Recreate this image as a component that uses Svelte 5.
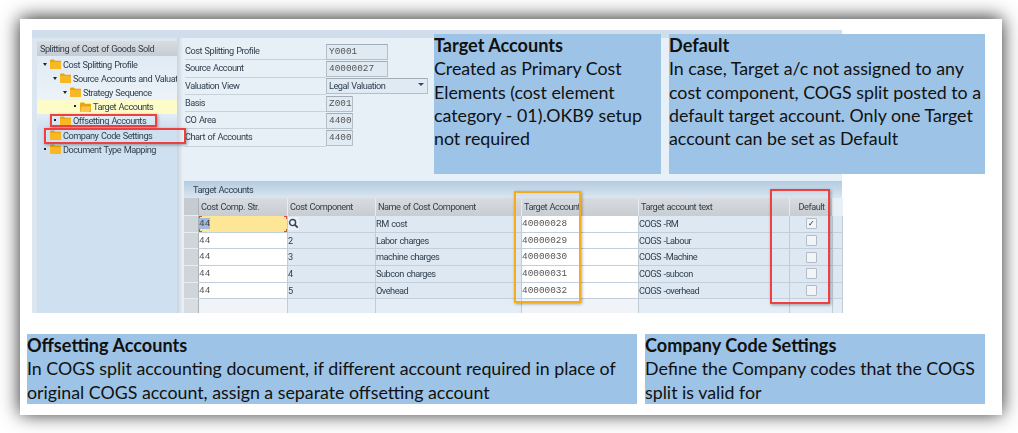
<script lang="ts">
	const tree = [
		{ label: 'Cost Splitting Profile', level: 0, mark: 'open' },
		{ label: 'Source Accounts and Valuation View', level: 1, mark: 'open' },
		{ label: 'Strategy Sequence', level: 2, mark: 'open' },
		{ label: 'Target Accounts', level: 3, mark: 'leaf', active: true },
		{ label: 'Offsetting Accounts', level: 1, mark: 'leaf' },
		{ label: 'Company Code Settings', level: 0, mark: 'leaf' },
		{ label: 'Document Type Mapping', level: 0, mark: 'leaf' }
	];

	const fields = [
		{ label: 'Cost Splitting Profile', value: 'Y0001', size: 'mid' },
		{ label: 'Source Account', value: '40000027', size: 'mid' },
		{ label: 'Valuation View', value: 'Legal Valuation', size: 'select' },
		{ label: 'Basis', value: 'Z001', size: 'small' },
		{ label: 'CO Area', value: '4400', size: 'small' },
		{ label: 'Chart of Accounts', value: '4400', size: 'small' }
	];

	const rows = [
		{ comp: '2', name: 'RM cost', account: '40000028', text: 'COGS -RM', checked: true },
		{ comp: '2', name: 'Labor charges', account: '40000029', text: 'COGS -Labour' },
		{ comp: '3', name: 'machine charges', account: '40000030', text: 'COGS -Machine' },
		{ comp: '4', name: 'Subcon charges', account: '40000031', text: 'COGS -subcon' },
		{ comp: '5', name: 'Ovehead', account: '40000032', text: 'COGS -overhead' }
	];
</script>

{#snippet folder(open)}
	<svg class="folder" viewBox="0 0 11 10" width="11" height="10" aria-hidden="true">
		<path d="M0 1.5 L0.6 .5 H4 L5 1.8 H11 V10 H0 Z" fill="#e8a412" />
		{#if open}
			<path d="M1.8 4.4 H11 L9.4 10 H0 Z" fill="#fbc64a" />
		{:else}
			<rect x="0" y="3" width="11" height="7" fill="#f8b823" />
		{/if}
	</svg>
{/snippet}

<div class="page">
	<div class="card">
		<div class="sap">
			<div class="sap-top"></div>
			<div class="sap-body">
				<aside class="nav">
					<div class="nav-head">Splitting of Cost of Goods Sold</div>
					<ul class="tree">
						{#each tree as item}
							<li class="node" class:active={item.active} style="padding-left: {6 + item.level * 10}px">
								<span class="mark {item.mark}"></span>
								{@render folder(item.active)}
								<span class="node-label">{item.label}</span>
							</li>
						{/each}
					</ul>
				</aside>
				<div class="splitter"></div>
				<main class="content">
					<div class="form">
						{#each fields as field}
							<div class="field">
								<span class="field-label">{field.label}</span>
								{#if field.size === 'select'}
									<span class="input select">{field.value}<i class="caret"></i></span>
								{:else}
									<span class="input mono {field.size}">{field.value}</span>
								{/if}
							</div>
						{/each}
					</div>
					<section class="grid-wrap">
						<div class="grid-title">Target Accounts</div>
						<div class="grid">
							<div class="gutter head"></div>
							<div class="th">Cost Comp. Str.</div>
							<div class="th">Cost Component</div>
							<div class="th">Name of Cost Component</div>
							<div class="th">Target Account</div>
							<div class="th">Target account text</div>
							<div class="th right">Default</div>
							<div class="th blank"></div>
							{#each rows as row, i}
								<div class="gutter"></div>
								<div class="td white mono" class:focus={i === 0}><span class:picked={i === 0}>44</span></div>
								<div class="td">
									{#if i === 0}
										<span class="lookup">
											<svg viewBox="0 0 12 12" width="11" height="11" aria-hidden="true">
												<circle cx="5" cy="5" r="3.3" fill="none" stroke="#33475a" stroke-width="1.6" />
												<path d="M7.6 7.6 L10.6 10.6" stroke="#33475a" stroke-width="2" />
											</svg>
										</span>
									{:else}
										{row.comp}
									{/if}
								</div>
								<div class="td">{row.name}</div>
								<div class="td white mono">{row.account}</div>
								<div class="td">{row.text}</div>
								<div class="td check-cell">
									<span class="check">{row.checked ? '✓' : ''}</span>
								</div>
								<div class="td"></div>
							{/each}
							<div class="gutter last"></div>
							<div class="td white last"></div>
							<div class="td last"></div>
							<div class="td last"></div>
							<div class="td white last"></div>
							<div class="td last"></div>
							<div class="td last"></div>
							<div class="td last"></div>
						</div>
					</section>
				</main>
			</div>
		</div>

		<div class="note note-target">
			<h3>Target Accounts</h3>
			<p>Created as Primary Cost Elements (cost element category - 01).OKB9 setup not required</p>
		</div>
		<div class="note note-default">
			<h3>Default</h3>
			<p>In case, Target a/c not assigned to any cost component, COGS split posted to a default target account. Only one Target account can be set as Default</p>
		</div>

		<span class="mark-box red box-offset"></span>
		<span class="mark-box red box-company"></span>
		<span class="mark-box orange box-account"></span>
		<span class="mark-box red box-check"></span>

		<div class="notes">
			<div class="note wide">
				<h3>Offsetting Accounts</h3>
				<p>In COGS split accounting document, if different account required in place of original COGS account, assign a separate offsetting account</p>
			</div>
			<div class="note narrow">
				<h3>Company Code Settings</h3>
				<p>Define the Company codes that the COGS split is valid for</p>
			</div>
		</div>
	</div>
</div>

<style>
	:global(body) {
		background: #fff;
	}
	.page {
		height: 433px;
		overflow: hidden;
		padding: 19px 0 0 20px;
		box-sizing: border-box;
	}
	.card {
		position: relative;
		box-sizing: border-box;
		width: 982px;
		height: 396px;
		padding: 11px 0 0 12px;
		background: #fff;
		box-shadow: 0 -1px 18px rgba(0, 0, 0, 0.85);
		font-family: Roboto, 'Liberation Sans', sans-serif;
	}
	.sap {
		width: 810px;
		height: 283px;
		display: flex;
		flex-direction: column;
		background: #e8f0f7;
		color: #2f3f4e;
		font-size: 9.2px;
		letter-spacing: -0.5px;
		word-spacing: 0.8px;
		filter: blur(0.25px);
	}
	.sap-top {
		height: 8px;
		background: #cfdeea;
	}
	.sap-body {
		flex: 1;
		display: flex;
		min-height: 0;
	}
	.nav {
		width: 145px;
		padding: 3px 0 0 5px;
		box-sizing: border-box;
		background: #dbe6f0;
		display: flex;
		flex-direction: column;
	}
	.nav-head {
		height: 15px;
		line-height: 15px;
		padding-left: 3px;
		background: linear-gradient(#d9dde2, #c6ccd3);
		white-space: nowrap;
	}
	.tree {
		flex: 1;
		list-style: none;
		margin: 0;
		padding: 1px 0 0;
		background: linear-gradient(#dfeaf4 0, #eef4f9 50px, #cfe0f0 72px, #cfe0f0 100%);
	}
	.node {
		display: flex;
		align-items: center;
		height: 14.2px;
		white-space: nowrap;
		overflow: hidden;
		box-sizing: border-box;
	}
	.node.active {
		background: #fdfbc8;
	}
	.mark {
		flex: none;
		width: 7px;
		height: 5px;
		display: block;
		position: relative;
	}
	.mark.open::before {
		content: '';
		position: absolute;
		left: 0;
		top: 1px;
		border-left: 2.5px solid transparent;
		border-right: 2.5px solid transparent;
		border-top: 3px solid #222;
	}
	.mark.leaf::before {
		content: '';
		position: absolute;
		left: 1px;
		top: 1px;
		width: 2px;
		height: 2px;
		background: #222;
	}
	.folder {
		flex: none;
		margin: 0 2px 0 0;
	}
	.splitter {
		width: 6px;
		background: linear-gradient(90deg, #c9d3dc, #e8f0f7);
	}
	.content {
		flex: 1;
		min-width: 0;
		display: flex;
		flex-direction: column;
	}
	.form {
		height: 143px;
		box-sizing: border-box;
		padding: 5px 0 0 2px;
	}
	.field {
		display: flex;
		align-items: center;
		height: 17.3px;
	}
	.field-label {
		width: 141px;
		height: 100%;
		line-height: 16px;
		box-sizing: border-box;
		border-bottom: 1px solid #c9d2da;
		white-space: nowrap;
	}
	.input {
		box-sizing: border-box;
		height: 16px;
		line-height: 13px;
		padding-left: 2px;
		background: #e0eaf3;
		border: 1px solid #b4bec7;
		border-top-color: #a2adb7;
	}
	.mid {
		width: 62px;
	}
	.small {
		width: 27px;
	}
	.select {
		width: 102px;
		position: relative;
	}
	.caret {
		position: absolute;
		right: 3px;
		top: 4px;
		border-left: 3px solid transparent;
		border-right: 3px solid transparent;
		border-top: 3.5px solid #2a4b78;
	}
	.mono {
		font-family: 'Liberation Mono', monospace;
		font-size: 9.4px;
		letter-spacing: 0;
		color: #555;
	}
	.grid-wrap {
		flex: 1;
		min-height: 0;
		margin-left: 1px;
		display: flex;
		flex-direction: column;
	}
	.grid-title {
		height: 17px;
		line-height: 16px;
		padding-left: 9px;
		background: linear-gradient(#b5cde1, #dae6f0);
		border-top: 1px solid #b8cad9;
		box-sizing: border-box;
	}
	.grid {
		flex: 1;
		display: grid;
		grid-template-columns: 15px 89px 88px 146px 117px 151px 43px 10px;
		grid-template-rows: 18px repeat(5, 16.7px) 1fr;
	}
	.gutter {
		background: #d0d5da;
		border-bottom: 1px solid #e8edf1;
		border-right: 1px solid #aab3bb;
		box-sizing: border-box;
	}
	.gutter.head {
		background: #c5cbd1;
	}
	.gutter.last {
		background: #d8dde2;
		border-bottom: 0;
	}
	.th {
		background: linear-gradient(#d8dbdf, #c8cdd2);
		line-height: 18px;
		padding-left: 2px;
		border-right: 1px solid #e6ebef;
		box-sizing: border-box;
		white-space: nowrap;
		overflow: hidden;
	}
	.th.right {
		padding-left: 1px;
		text-align: center;
	}
	.th.blank {
		background: #e8f0f7;
		border: 0;
	}
	.td {
		box-sizing: border-box;
		line-height: 16px;
		background: #dde8f2;
		border-right: 1px solid #c0ccd6;
		border-bottom: 1px solid #c3cfda;
		white-space: nowrap;
		overflow: hidden;
	}
	.td.white {
		background: #fff;
	}
	.td.last {
		border-bottom: 0;
		background: #e4edf5;
	}
	.td.white.last {
		background: #f0f4f8;
	}
	.td.focus {
		--tick: linear-gradient(#d84a4a, #d84a4a);
		background:
			var(--tick) left top / 3px 1px no-repeat,
			var(--tick) left top / 1px 3px no-repeat,
			var(--tick) right top / 3px 1px no-repeat,
			var(--tick) right top / 1px 3px no-repeat,
			var(--tick) left bottom / 3px 1px no-repeat,
			var(--tick) left bottom / 1px 3px no-repeat,
			var(--tick) right bottom / 3px 1px no-repeat,
			var(--tick) right bottom / 1px 3px no-repeat,
			#fde797;
	}
	.picked {
		background: #9fbcdc;
		color: #444;
	}
	.lookup {
		display: inline-flex;
		align-items: center;
		justify-content: center;
		width: 11px;
		height: 13px;
		background: #eef2f6;
		vertical-align: top;
		margin-top: 1px;
	}
	.check-cell {
		display: flex;
		align-items: center;
		justify-content: flex-end;
		padding-right: 15px;
	}
	.check {
		width: 9px;
		height: 9px;
		flex: none;
		background: #f2f5f8;
		border: 1px solid #b3bcc5;
		border-radius: 1px;
		font-size: 8px;
		line-height: 9px;
		text-align: center;
		color: #222;
	}
	.note {
		box-sizing: border-box;
		background: #9dc3e6;
		color: #111;
		font-family: Lato, 'Open Sans', sans-serif;
		font-size: 17.8px;
		line-height: 23.3px;
		overflow: hidden;
	}
	.note h3 {
		margin: 0;
		font-size: 18.1px;
		line-height: 23.3px;
		font-weight: 700;
	}
	.note p {
		margin: 0;
	}
	.note-target {
		position: absolute;
		left: 414px;
		top: 15px;
		width: 227px;
		height: 140px;
	}
	.note-default {
		position: absolute;
		left: 649px;
		top: 15px;
		width: 316px;
		height: 140px;
	}
	.notes {
		display: flex;
		gap: 8px;
		margin: 21px 0 0 -5px;
	}
	.wide {
		width: 610px;
		height: 70px;
	}
	.narrow {
		width: 340px;
		height: 70px;
	}
	.mark-box {
		position: absolute;
		box-sizing: border-box;
		border: 2px solid #ee4040;
		box-shadow: 1px 1px 3px rgba(0, 0, 0, 0.35);
	}
	.mark-box.orange {
		border-color: #f4ac1c;
	}
	.box-offset {
		left: 30px;
		top: 95px;
		width: 107px;
		height: 13px;
	}
	.box-company {
		left: 24px;
		top: 109px;
		width: 142px;
		height: 16px;
	}
	.box-account {
		left: 494px;
		top: 172px;
		width: 67px;
		height: 112px;
	}
	.box-check {
		left: 750px;
		top: 170px;
		width: 60px;
		height: 115px;
	}
</style>
